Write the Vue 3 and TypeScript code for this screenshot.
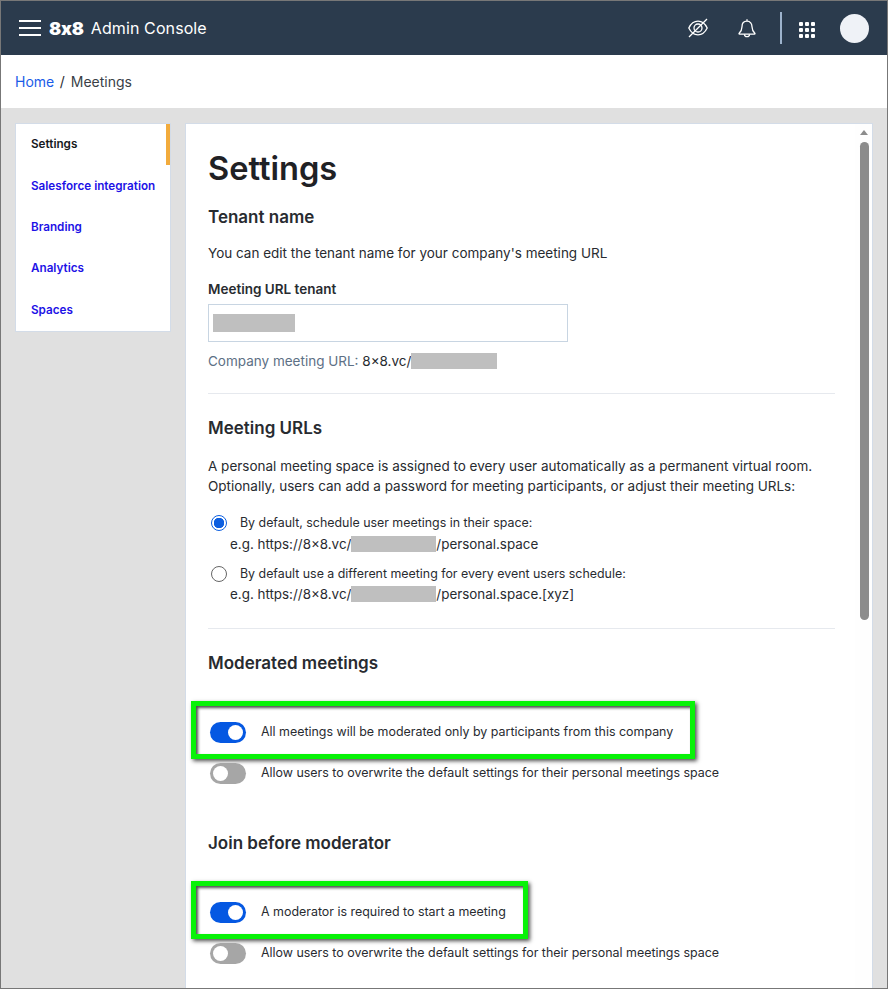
<script setup lang="ts">
const navItems = ['Settings', 'Salesforce integration', 'Branding', 'Analytics', 'Spaces']
const allow = 'Allow users to overwrite the default settings for their personal meetings space'
</script>

<template>
  <div class="page">
    <header class="topbar">
      <div class="brand">
        <svg class="burger" width="22" height="18" viewBox="0 0 22 18"><path d="M0 2h22M0 9h22M0 16h22" stroke="#fff" stroke-width="2.2" /></svg>
        <span class="logo">8x8</span>
        <span class="product">Admin Console</span>
      </div>
      <div class="actions">
        <svg class="eye" width="20" height="20" viewBox="0 0 20 20" fill="none" stroke="#fff" stroke-width="1.3">
          <path d="M.8 10C3 5.500 6 3.200 10 3.200S17 5.500 19.200 10C17 14.500 14 16.800 10 16.800S3 14.500.8 10Z" />
          <circle cx="10" cy="10" r="4" />
          <path d="M1 19L19 1" />
        </svg>
        <svg class="bell" width="20" height="20" viewBox="0 0 20 20" fill="none" stroke="#fff" stroke-width="1.3">
          <path d="M10 3.200V1.200M10 3.200c-3.300 0-5 2.600-5 5.600 0 3-.9 4.700-3 6.700 0 .4.200.6.600.6h14.800c.4 0 .6-.2.600-.6-2.100-2-3-3.700-3-6.700 0-3-1.700-5.600-5-5.600Z" />
          <path d="M7.500 16.200a2.500 2.500 0 0 0 5 0" />
        </svg>
        <span class="divider"></span>
        <div class="apps"><i v-for="n in 9" :key="n"></i></div>
        <span class="avatar"></span>
      </div>
    </header>

    <nav class="crumbs">
      <a class="home">Home</a><span class="sep">/</span><span class="current">Meetings</span>
    </nav>

    <main class="body">
      <aside class="side">
        <a v-for="(item, i) in navItems" :key="item" class="nav" :class="{ active: i === 0 }">{{ item }}</a>
      </aside>

      <section class="card">
        <div class="scroll">
          <h1>Settings</h1>

          <h2 class="first">Tenant name</h2>
          <p class="intro">You can edit the tenant name for your company's meeting URL</p>
          <label class="field-label">Meeting URL tenant</label>
          <div class="input"><span class="blur b82"></span></div>
          <p class="company"><span class="muted">Company meeting URL:</span> 8×8.vc/<span class="blur b86"></span></p>

          <hr class="rule-a" />

          <h2>Meeting URLs</h2>
          <p class="desc">A personal meeting space is assigned to every user automatically as a permanent virtual room.<br />Optionally, users can add a password for meeting participants, or adjust their meeting URLs:</p>

          <div class="radio-row one">
            <span class="radio on"></span>
            <span class="radio-label">By default, schedule user meetings in their space:</span>
          </div>
          <p class="eg">e.g. https://8×8.vc/<span class="blur b85"></span>/personal.space</p>
          <div class="radio-row two">
            <span class="radio"></span>
            <span class="radio-label">By default use a different meeting for every event users schedule:</span>
          </div>
          <p class="eg last">e.g. https://8×8.vc/<span class="blur b85"></span>/personal.space.[xyz]</p>

          <hr class="rule-b" />

          <h2>Moderated meetings</h2>
          <div class="toggles">
            <div class="toggle-row">
              <span class="toggle on"></span>
              <span>All meetings will be moderated only by participants from this company</span>
              <span class="mark mark-a"></span>
            </div>
            <div class="toggle-row">
              <span class="toggle"></span>
              <span>{{ allow }}</span>
            </div>
          </div>

          <h2 class="join">Join before moderator</h2>
          <div class="toggles">
            <div class="toggle-row">
              <span class="toggle on"></span>
              <span>A moderator is required to start a meeting</span>
              <span class="mark mark-b"></span>
            </div>
            <div class="toggle-row">
              <span class="toggle"></span>
              <span>{{ allow }}</span>
            </div>
          </div>
        </div>

        <div class="scrollbar">
          <span class="arrow"></span>
          <span class="thumb"></span>
        </div>
      </section>
    </main>
  </div>
</template>

<style>
html, body { margin: 0; background: #e0e0e0; }
</style>

<style scoped>
.page {
  box-sizing: border-box;
  width: 888px;
  height: 989px;
  display: flex;
  flex-direction: column;
  overflow: hidden;
  border: 1px solid #777;
  font-family: Inter, "Liberation Sans", sans-serif;
  color: #282b30;
  background: #e0e0e0;
}
.topbar {
  flex: none;
  height: 54px;
  background: #2b3b4d;
  display: flex;
  align-items: center;
  justify-content: space-between;
  color: #fff;
}
.brand { display: flex; align-items: center; padding-left: 18px; }
.burger { margin-right: 8px; }
.logo { font-size: 18px; font-weight: 900; letter-spacing: -0.2px; margin-right: 7px; }
.product { font-size: 16px; letter-spacing: 0.1px; }
.actions { display: flex; align-items: center; }
.eye { margin-right: 29px; margin-top: -1px; }
.bell { margin-right: 23px; }
.divider { width: 2px; height: 32px; background: #9db3cc; margin-right: 17px; }
.apps {
  display: grid;
  grid-template-columns: repeat(3, 4px);
  grid-auto-rows: 4px;
  gap: 2px;
  margin: 3px 25px 0 0;
}
.apps i { background: #fff; border-radius: 1px; }
.avatar { width: 29px; height: 29px; border-radius: 50%; background: #eff2f7; margin-right: 18px; }

.crumbs {
  flex: none;
  height: 53px;
  background: #fff;
  display: flex;
  align-items: center;
  padding-left: 14px;
  font-size: 14px;
}
.home { color: #1a5ce8; }
.sep { margin: 0 6px 0 5.500px; }
.current { color: #3a3f47; }

.body {
  flex: 1;
  min-height: 0;
  display: flex;
  align-items: flex-start;
  gap: 14px;
  padding: 15px 14px 0;
}
.side {
  flex: none;
  box-sizing: border-box;
  width: 156px;
  height: 209px;
  background: #fff;
  border: 1px solid #d3dce8;
  display: flex;
  flex-direction: column;
}
.nav {
  box-sizing: border-box;
  height: 41.400px;
  flex: none;
  display: flex;
  align-items: center;
  padding: 0 0 1px 15px;
  font-size: 11.700px;
  font-weight: 600;
  color: #1d12e6;
}
.nav.active { color: #17191c; box-shadow: inset -4px 0 0 #f2ab3c; }

.card {
  flex: none;
  position: relative;
  box-sizing: border-box;
  width: 688px;
  height: 866px;
  background: #fff;
  border: 1px solid #d3dce8;
  border-bottom: 0;
  overflow: hidden;
}
.scroll { padding: 0 37px 0 22px; }
h1 { margin: 22px 0 0; font-size: 32.600px; line-height: 44px; font-weight: 600; color: #1f2125; }
h2 { margin: 0; font-size: 17px; line-height: 24px; font-weight: 600; color: #282b30; }
h2.first { margin-top: 15px; }
p { margin: 0; }
.intro { margin-top: 14px; font-size: 13.500px; line-height: 20px; }
.field-label { display: block; margin-top: 16px; font-size: 13.500px; line-height: 20px; font-weight: 600; }
.input {
  box-sizing: border-box;
  width: 360px;
  height: 38px;
  margin-top: 5px;
  border: 1px solid #c8d5e2;
  display: flex;
  align-items: center;
  padding-left: 4px;
}
.blur { display: inline-block; height: 16px; background: #bfbfbf; vertical-align: -3px; }
.b82 { width: 82px; height: 18px; }
.b85 { width: 85px; }
.b86 { width: 86px; }
.company { margin-top: 9px; font-size: 13.500px; line-height: 20px; }
.muted { color: #5d7085; }
hr { margin: 0; border: 0; border-top: 1px solid #e6e9ee; }
.rule-a { margin: 22px 0 22px; }
.desc { margin-top: 16px; font-size: 13.500px; line-height: 20px; }
.radio-row { display: flex; align-items: center; font-size: 12.400px; line-height: 20px; padding-left: 3px; }
.radio-row.one { margin-top: 17px; }
.radio-row.two { margin-top: 10px; }
.radio {
  box-sizing: border-box;
  width: 16px;
  height: 16px;
  border-radius: 50%;
  border: 1px solid #666;
  margin-right: 13px;
  background: #fff;
}
.radio.on { border-color: #0d5fe0; background: radial-gradient(circle, #0d5fe0 0 5px, #fff 5.500px); }
.eg { margin-top: 1px; padding-left: 22px; font-size: 13.400px; line-height: 20px; }
.eg.last { margin-top: 0; }
.rule-b { margin: 24px 0 22px; }

.toggles { margin-top: 46px; display: flex; flex-direction: column; gap: 21px; }
.toggle-row { position: relative; display: flex; align-items: center; height: 20px; padding-left: 2px; font-size: 12.430px; }
.toggle {
  flex: none;
  position: relative;
  top: 1px;
  width: 36px;
  height: 21px;
  border-radius: 11px;
  background: #a6a6a6;
  margin-right: 15px;
}
.toggle::after {
  content: "";
  position: absolute;
  top: 3px;
  left: 3px;
  width: 15px;
  height: 15px;
  border-radius: 50%;
  background: #fff;
}
.toggle.on { background: #0558e2; }
.toggle.on::after { left: 18px; }
.mark {
  position: absolute;
  box-sizing: border-box;
  left: -17px;
  top: -20px;
  height: 58px;
  border: 5px solid #08f208;
  box-shadow: inset 2px 2px 3px rgba(0,0,0,.7), 2px 2px 4px rgba(0,0,0,.7);
  pointer-events: none;
}
.mark-a { width: 504px; }
.mark-b { width: 337px; }
.join { margin-top: 49px; }

.scrollbar {
  position: absolute;
  top: 0;
  right: 0;
  bottom: 0;
  width: 17px;
  background: #fefefe;
}
.arrow {
  position: absolute;
  top: 6px;
  left: 5px;
  border-left: 4.500px solid transparent;
  border-right: 4.500px solid transparent;
  border-bottom: 5px solid #8c8c8c;
}
.thumb {
  position: absolute;
  top: 18px;
  left: 5px;
  width: 9px;
  height: 478px;
  border-radius: 5px;
  background: #8c8c8c;
}
</style>
